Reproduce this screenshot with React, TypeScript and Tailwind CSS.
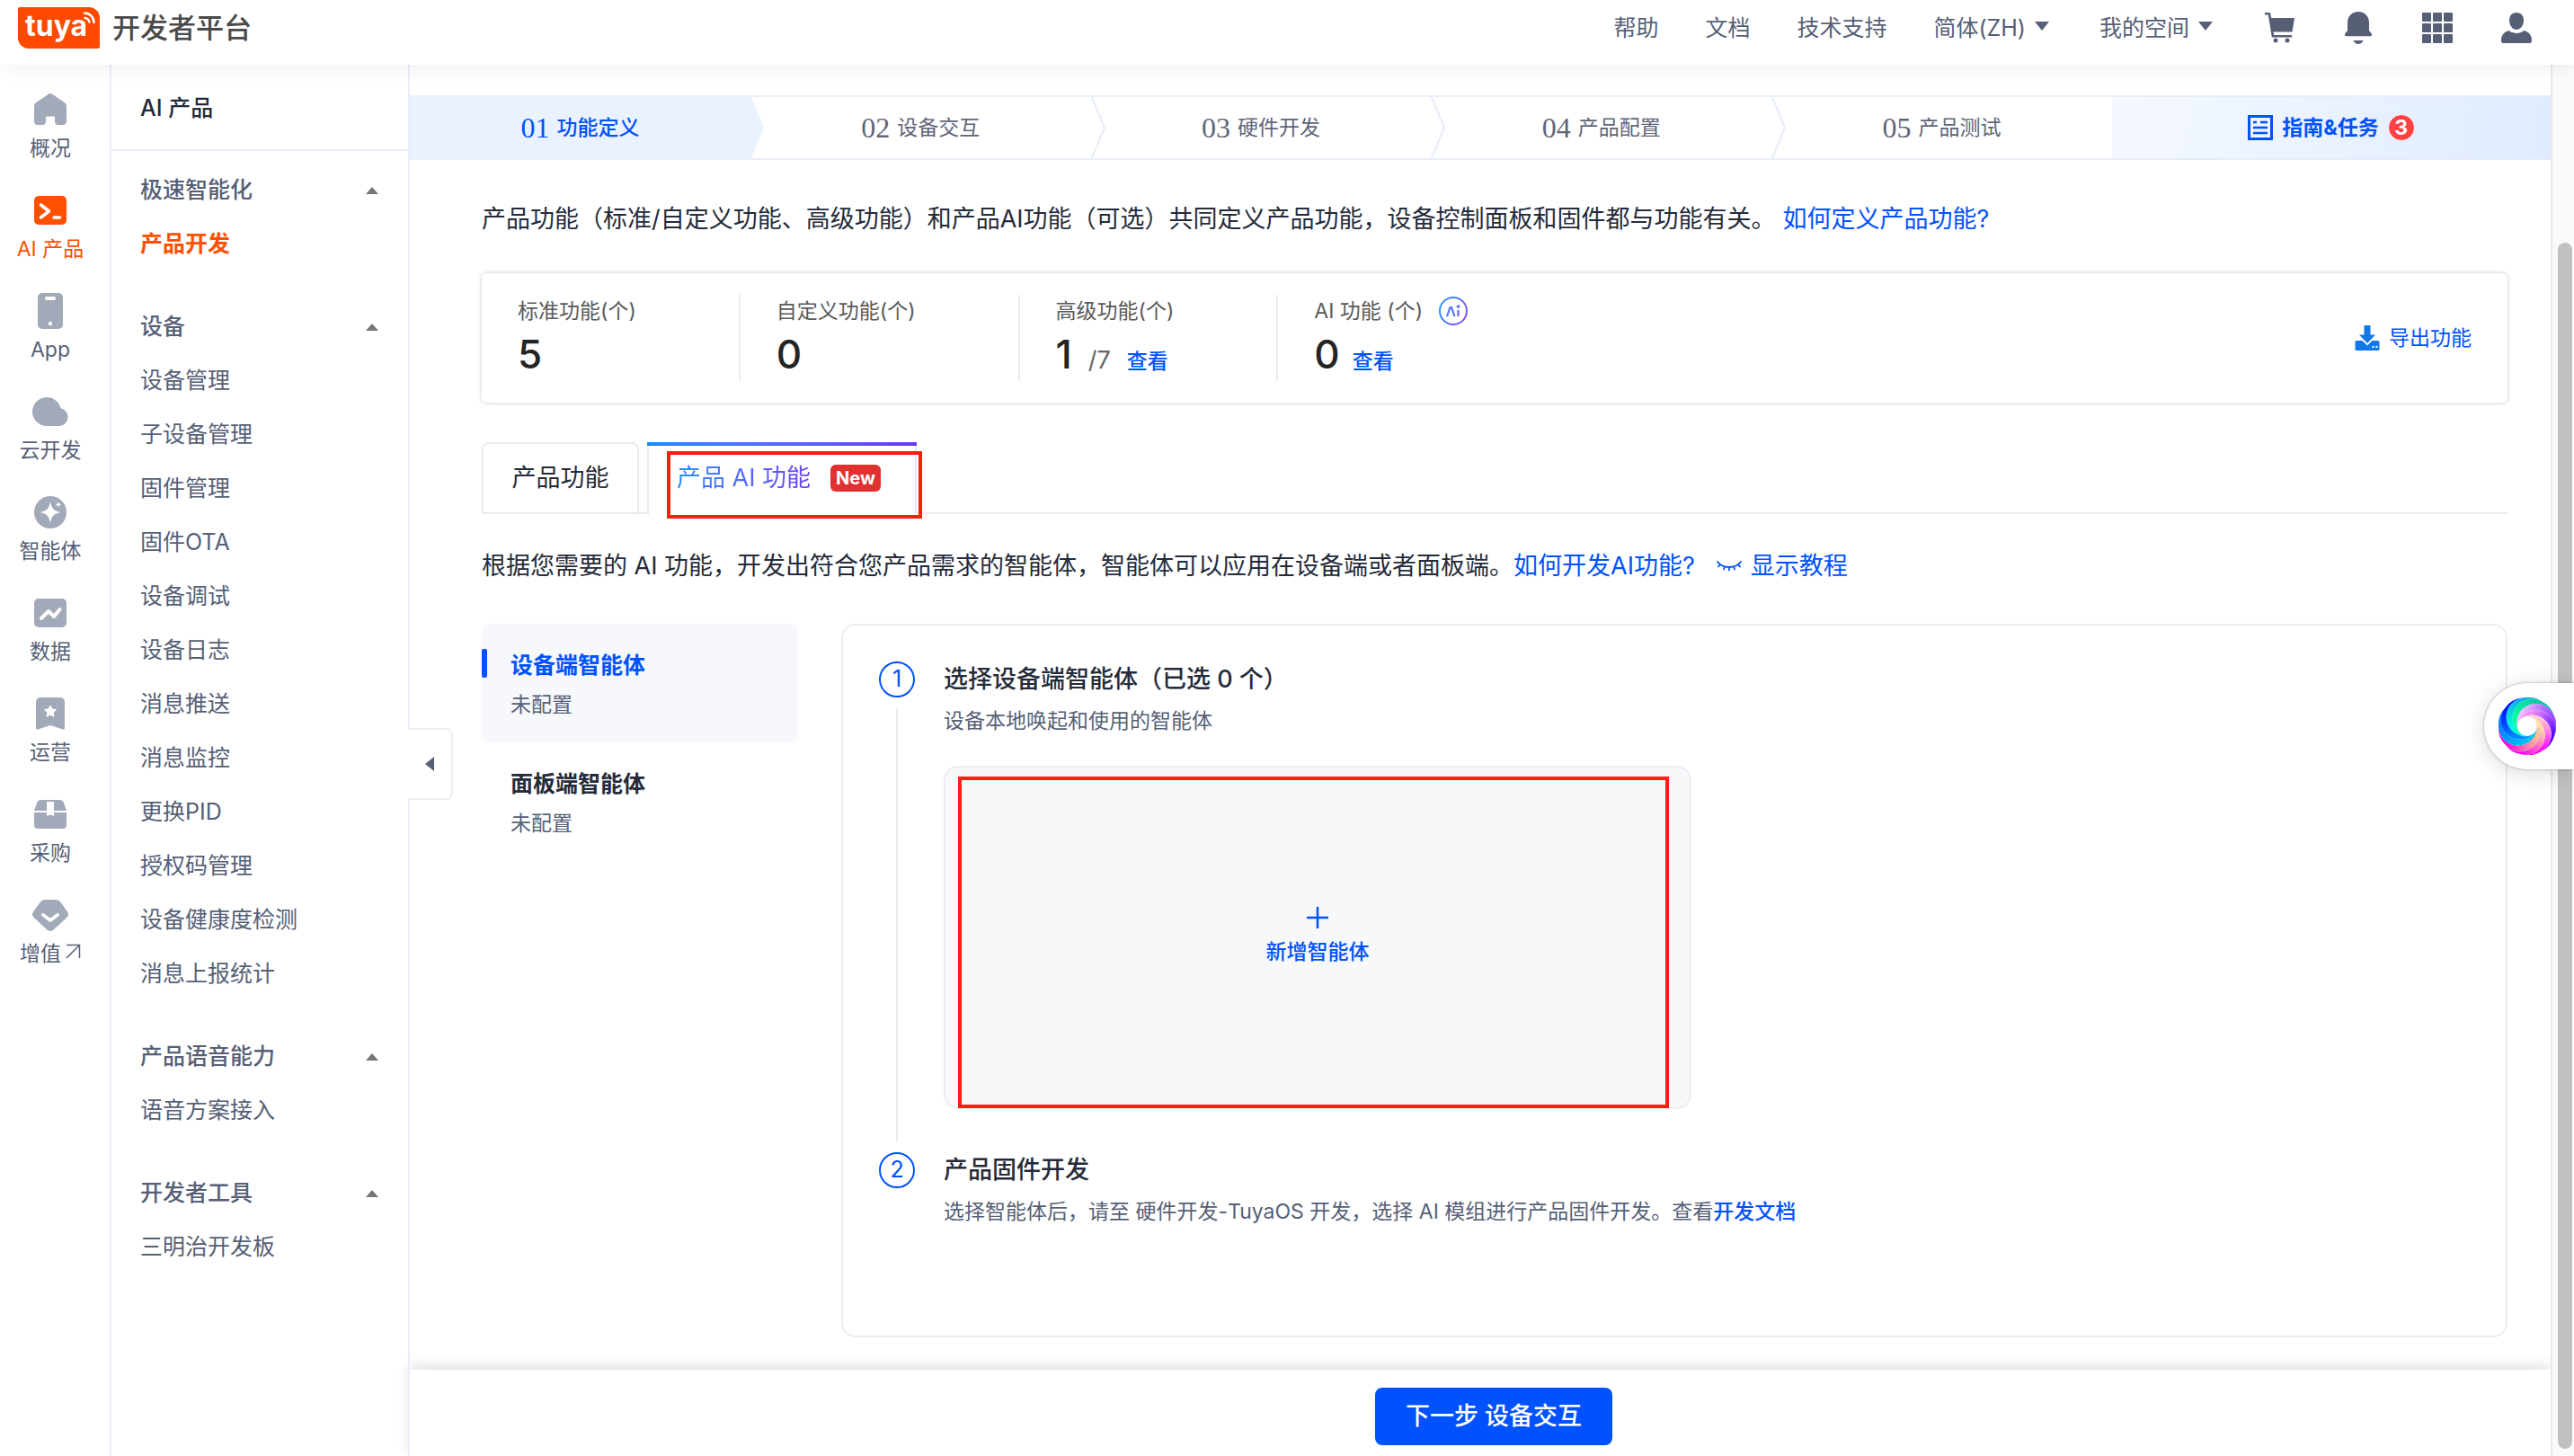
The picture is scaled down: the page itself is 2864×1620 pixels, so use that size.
import type { ReactNode } from 'react';

type RailItem = {
  label: string;
  icon: ReactNode;
  active?: boolean;
  external?: boolean;
};

const railItems: RailItem[] = [
  {
    label: '概况',
    icon: <path d="M17.500 2.900a4.500 4.500 0 0 1 5 0L36 12.200a4.500 4.500 0 0 1 2 3.700V33a4 4 0 0 1-4 4h-5a4 4 0 0 1-4-4v-5.500h-10V33a4 4 0 0 1-4 4H6a4 4 0 0 1-4-4V15.900a4.500 4.500 0 0 1 2-3.700z" />,
  },
  {
    label: 'AI 产品',
    active: true,
    icon: (
      <>
        <rect x="2" y="4" width="36" height="32" rx="5" />
        <path d="M9.500 14l9 7-9 7M24 28h6.500" fill="none" stroke="#fff" strokeWidth="3.500" strokeLinecap="round" strokeLinejoin="round" />
      </>
    ),
  },
  {
    label: 'App',
    icon: (
      <>
        <rect x="6" y="0" width="28" height="40" rx="5" />
        <rect x="14" y="4" width="12" height="4" rx="2" fill="#fff" />
        <circle cx="20" cy="34" r="2.200" fill="#fff" />
      </>
    ),
  },
  {
    label: '云开发',
    icon: <path d="M16 4a16 16 0 0 1 15.500 12.200A10 10 0 0 1 30 36H16A16 16 0 0 1 16 4z" />,
  },
  {
    label: '智能体',
    icon: (
      <>
        <circle cx="20" cy="20" r="18" />
        <path d="M20 8c1.500 8 4 10.500 12 12-8 1.500-10.500 4-12 12-1.500-8-4-10.500-12-12 8-1.500 10.500-4 12-12z" fill="#fff" />
        <path d="M29 8c.5 2.200 1.200 2.900 3.400 3.400-2.200.5-2.900 1.200-3.400 3.400-.5-2.200-1.200-2.900-3.400-3.400 2.200-.5 2.900-1.200 3.400-3.400z" fill="#fff" />
      </>
    ),
  },
  {
    label: '数据',
    icon: (
      <>
        <rect x="2" y="4" width="36" height="32" rx="5" />
        <path d="M10 26l8-8 6 6 6.500-8" fill="none" stroke="#fff" strokeWidth="4" strokeLinecap="round" strokeLinejoin="round" />
      </>
    ),
  },
  {
    label: '运营',
    icon: (
      <>
        <path d="M4 7a5 5 0 0 1 5-5h22a5 5 0 0 1 5 5v29c0 1.500-1 2-2.200 1.500L20 33 6.200 37.500C5 38 4 37.500 4 36z" />
        <path d="M20 11l2 4 4.500.6-3.300 3.200.8 4.500-4-2.200-4 2.200.8-4.500-3.300-3.200L18 15z" fill="#fff" stroke="#fff" strokeWidth="1" strokeLinejoin="round" />
      </>
    ),
  },
  {
    label: '采购',
    icon: (
      <>
        <path d="M9 4h22a4 4 0 0 1 3.800 2.700L38 16H2L5.200 6.700A4 4 0 0 1 9 4z" />
        <path d="M2 18h36v14a4 4 0 0 1-4 4H6a4 4 0 0 1-4-4z" />
        <path d="M16 6h8v16l-4-1.500-4 1.500z" fill="#fff" />
      </>
    ),
  },
  {
    label: '增值',
    external: true,
    icon: (
      <>
        <path d="M14 3h12a7 7 0 0 1 5.500 3l7.500 10.500a5 5 0 0 1-.8 6.500L23.500 36.500a5 5 0 0 1-7 0L1.800 23A5 5 0 0 1 1 16.500L8.500 6A7 7 0 0 1 14 3z" />
        <path d="M12 20l8 6 8-6" fill="none" stroke="#fff" strokeWidth="3.800" strokeLinecap="round" strokeLinejoin="round" />
      </>
    ),
  },
];

const menuGroups = [
  { title: '极速智能化', items: ['产品开发'] },
  {
    title: '设备',
    items: [
      '设备管理',
      '子设备管理',
      '固件管理',
      '固件OTA',
      '设备调试',
      '设备日志',
      '消息推送',
      '消息监控',
      '更换PID',
      '授权码管理',
      '设备健康度检测',
      '消息上报统计',
    ],
  },
  { title: '产品语音能力', items: ['语音方案接入'] },
  { title: '开发者工具', items: ['三明治开发板'] },
];

const steps = [
  { no: '01', label: '功能定义' },
  { no: '02', label: '设备交互' },
  { no: '03', label: '硬件开发' },
  { no: '04', label: '产品配置' },
  { no: '05', label: '产品测试' },
];

// [outer colour, inner colour] for each blade, clockwise from the top
const blades = [
  ['#0fa8ec', '#00ffd5'],
  ['#12c3a4', '#00ffa0'],
  ['#8f45ff', '#f0c0ff'],
  ['#4a00ff', '#f48cff'],
  ['#ff00ff', '#ffd0d0'],
  ['#ff00f0', '#ffe2a0'],
  ['#ff00dc', '#ffc090'],
  ['#0080ff', '#00c4f0'],
  ['#0010ff', '#0090ff'],
];

function polar(deg: number, r: number) {
  const a = (deg * Math.PI) / 180;
  return [32 + r * Math.cos(a), 32 + r * Math.sin(a)];
}

function SwirlLogo() {
  return (
    <svg viewBox="0 0 64 64" className="size-16" aria-hidden="true">
      {blades.map(([outer, inner], i) => {
        const from = -100 + i * 40;
        const to = from + 40;
        const [ax, ay] = polar(from, 32);
        const [bx, by] = polar(from + 180, 11);
        const [cx, cy] = polar(to + 180, 11);
        const [dx, dy] = polar(to, 32);
        return (
          <g key={from}>
            <linearGradient id={`blade-${i}`} gradientUnits="userSpaceOnUse" x1={dx} y1={dy} x2={bx} y2={by}>
              <stop offset="0.1" stopColor={outer} />
              <stop offset="1" stopColor={inner} />
            </linearGradient>
            <path
              d={`M${ax} ${ay}A21.5 21.5 0 0 0 ${bx} ${by}A11 11 0 0 1 ${cx} ${cy}A21.5 21.5 0 0 1 ${dx} ${dy}A26 26 0 0 0 ${ax} ${ay}z`}
              fill={`url(#blade-${i})`}
            />
          </g>
        );
      })}
    </svg>
  );
}

function DownCaret() {
  return (
    <svg viewBox="0 0 24 16" className="h-4 w-6" fill="currentColor" aria-hidden="true">
      <path d="M4 1h16l-8 10z" />
    </svg>
  );
}

function Header() {
  return (
    <header className="relative z-20 flex h-[72px] items-center bg-white pr-[46px] pb-[10px] pl-5 shadow-[0_4px_20px_rgba(0,0,0,0.06)]">
      <a href="#" className="flex items-center gap-[14px]">
        <span className="relative flex h-[46px] w-[91px] items-center rounded-tr-[12px] rounded-bl-[12px] rounded-tl-[2px] rounded-br-[2px] bg-[#ff4800] pb-1 pl-2 text-[32px] leading-[40px] font-bold text-white">
          tuya
          <svg viewBox="0 0 16 16" className="absolute top-1 right-1 size-4" fill="none" stroke="#fff" strokeWidth="2.500" strokeLinecap="round" aria-hidden="true">
            <path d="M3 2.500a10.500 10.500 0 0 1 10.500 10.500M3.500 8a5 5 0 0 1 4.800 4.500" />
          </svg>
        </span>
        <span className="text-[31px] leading-[40px] font-medium text-[#4a4a4a]">开发者平台</span>
      </a>
      <nav className="ml-auto flex items-center gap-[52px] text-[25px] leading-[36px] text-[#565f76]">
        <a href="#">帮助</a>
        <a href="#">文档</a>
        <a href="#">技术支持</a>
        <button className="flex items-center gap-[6px]">
          简体(ZH)
          <DownCaret />
        </button>
        <button className="flex items-center gap-[6px]">
          我的空间
          <DownCaret />
        </button>
        <button aria-label="购物车">
          <svg viewBox="0 0 36 36" className="size-9" fill="currentColor">
            <path d="M2 1h6l1.200 6H35l-2.500 15.500H11.500l.6 3.500H32v2.500H9.800L5.800 3.500H2z" />
            <circle cx="14" cy="32" r="2.500" />
            <circle cx="27" cy="32" r="2.500" />
          </svg>
        </button>
        <button aria-label="通知">
          <svg viewBox="0 0 36 36" className="size-9" fill="currentColor">
            <path d="M18 0c7 0 12 5 12 12v9l2.600 3.200c1.200 1.500.4 3-1.400 3H4.800c-1.800 0-2.600-1.500-1.400-3L6 21v-9C6 5 11 0 18 0z" />
            <path d="M12.500 32h11c-1 2.500-3 4-5.500 4s-4.500-1.500-5.500-4z" />
          </svg>
        </button>
        <button aria-label="应用">
          <svg viewBox="0 0 36 36" className="size-9" fill="currentColor">
            {[1, 13, 25].map((y) => [1, 13, 25].map((x) => <rect key={`${x}-${y}`} x={x} y={y} width="10" height="10" rx="1" />))}
          </svg>
        </button>
        <button aria-label="账户">
          <svg viewBox="0 0 36 36" className="size-9" fill="currentColor">
            <path d="M18 1c5 0 8 3.500 8 8.500S23 20 18 20s-8-5.500-8-10.500S13 1 18 1z" />
            <path d="M9.500 21c5 4 12 4 17 0 5 1.500 8.500 5 8.500 10.500 0 2.500-.5 3.500-2 3.500H3c-1.500 0-2-1-2-3.500C1 26 4.500 22.500 9.500 21z" />
          </svg>
        </button>
      </nav>
    </header>
  );
}

function Rail() {
  return (
    <nav className="flex w-[124px] shrink-0 flex-col items-center gap-[34px] border-r-2 border-[#e9eefa] pt-[30px] pr-[10px]">
      {railItems.map((item) => (
        <a
          key={item.label}
          href="#"
          className={`flex flex-col items-center gap-2 text-[23px] leading-[30px] ${item.active ? 'text-[#ff5000]' : 'text-[#565f76]'}`}
        >
          <svg viewBox="0 0 40 40" className={`size-10 ${item.active ? 'text-[#ff5000]' : 'text-[#a2a9b8]'}`} fill="currentColor" aria-hidden="true">
            {item.icon}
          </svg>
          <span className="flex gap-1 whitespace-nowrap">
            {item.label}
            {item.external && (
              <svg viewBox="0 0 18 18" className="mt-1 size-[18px]" fill="none" stroke="currentColor" strokeWidth="1.500" aria-hidden="true">
                <path d="M2 1.500h14.500V16M16 2L2 16" />
              </svg>
            )}
          </span>
        </a>
      ))}
    </nav>
  );
}

function SideMenu() {
  return (
    <nav className="relative w-[332px] shrink-0 border-r-2 border-[#e9eefa] text-[25px] text-[#565f76]">
      <h2 className="flex h-24 items-center border-b-2 border-[#e9eefa] pt-1 pl-8 font-medium text-[#232a3b]">AI 产品</h2>
      <div className="flex flex-col gap-8 px-8 pt-[14px]">
        {menuGroups.map((group) => (
          <div key={group.title}>
            <button className="flex h-[60px] w-full items-center justify-between font-medium">
              {group.title}
              <svg viewBox="0 0 16 8" className="h-2 w-4" fill="#767676" aria-hidden="true">
                <path d="M8 0l7 8H1z" />
              </svg>
            </button>
            {group.items.map((item) => (
              <a
                key={item}
                href="#"
                className={`flex h-[60px] items-center ${item === '产品开发' ? 'font-bold text-[#ff5000]' : ''}`}
              >
                {item}
              </a>
            ))}
          </div>
        ))}
      </div>

      {/* Collapse handle */}
      <button
        aria-label="收起菜单"
        className="absolute top-[738px] left-full z-10 flex h-20 w-[50px] items-center justify-center rounded-r-lg border-2 border-l-0 border-[#ebedf2] bg-white"
      >
        <svg viewBox="0 0 10 16" className="h-4 w-[10px]" fill="#565f76" aria-hidden="true">
          <path d="M10 0v16L0 8z" />
        </svg>
      </button>
    </nav>
  );
}

function StepBar() {
  return (
    <div className="mt-[34px] flex h-[72px] text-[23px]">
      {steps.map((step, i) => (
        <button
          key={step.no}
          className={`relative flex flex-1 items-center justify-center gap-2 border-y-2 ${
            i === 0 ? 'border-[#ebf2ff] bg-[#ebf2ff] font-medium text-[#0052ff]' : 'border-[#e9eefa] text-[#60657a]'
          }`}
        >
          <span className="font-['Liberation_Serif',serif] text-[32px] font-normal">{step.no}</span>
          {step.label}
          {i < steps.length - 1 && (
            <svg
              viewBox="0 0 16 72"
              className="absolute -top-[2px] left-full z-10 h-[72px] w-4"
              fill={i === 0 ? '#ebf2ff' : '#fff'}
              stroke={i === 0 ? 'none' : '#e6ecf9'}
              strokeWidth="2"
              aria-hidden="true"
            >
              <path d="M0 0l15 36L0 72" />
            </svg>
          )}
        </button>
      ))}
      <button className="flex w-[488px] items-center justify-center gap-[10px] border-y-2 border-[#e6ecf9] bg-[linear-gradient(105deg,#f5f9ff,#dfebff)] font-bold text-[#0052ff]">
        <svg viewBox="0 0 28 28" className="size-7" fill="none" stroke="currentColor" strokeWidth="3" aria-hidden="true">
          <rect x="1.500" y="1.500" width="25" height="25" />
          <path d="M6 8h4M14 8h8M6 14h16M6 20h16" strokeWidth="2.500" />
        </svg>
        指南&amp;任务
        <span className="flex size-[30px] items-center justify-center rounded-full border border-white bg-[#ff4044] text-white">3</span>
      </button>
    </div>
  );
}

function Stat({ label, value, last, children }: { label: ReactNode; value: string; last?: boolean; children?: ReactNode }) {
  return (
    <div className={`pl-10 ${last ? '' : 'border-r-2 border-[#ececee] pr-[114px]'}`}>
      <div className="flex h-9 items-center text-[23px] text-[#5a5a5a]">{label}</div>
      <div className="flex h-[60px] items-baseline text-[23px] leading-[60px]">
        <span className="text-[44px] font-medium text-[#242424]">{value}</span>
        {children}
      </div>
    </div>
  );
}

function StatsCard() {
  return (
    <section className="mt-10 flex items-center rounded-md bg-white py-6 pr-10 shadow-[0_0_5px_rgba(0,0,0,0.22)]">
      <Stat label="标准功能(个)" value="5" />
      <Stat label="自定义功能(个)" value="0" />
      <Stat label="高级功能(个)" value="1">
        <span className="ml-[18px] text-[27px] text-[#666]">/7</span>
        <a href="#" className="ml-[18px] font-medium text-[#0052ff]">查看</a>
      </Stat>
      <Stat
        last
        value="0"
        label={
          <>
            AI 功能 (个)
            <svg viewBox="0 0 32 32" className="ml-[18px] size-8" fill="none" stroke="url(#aiRing)" strokeWidth="2" aria-hidden="true">
              <linearGradient id="aiRing" gradientUnits="userSpaceOnUse" x1="0" y1="8" x2="32" y2="24">
                <stop offset="0" stopColor="#1e96ff" />
                <stop offset="1" stopColor="#8d4dff" />
              </linearGradient>
              <circle cx="16" cy="16" r="15" />
              <path d="M9 22l3.500-10h1.500l3.500 10M21.500 15v7" strokeWidth="2.200" />
              <path d="M21.500 8c.5 2 1 2.500 3 3-2 .5-2.500 1-3 3-.5-2-1-2.500-3-3 2-.5 2.500-1 3-3z" fill="#6d68ff" stroke="none" />
            </svg>
          </>
        }
      >
        <a href="#" className="ml-[14px] font-medium text-[#0052ff]">查看</a>
      </Stat>
      <button className="ml-auto flex items-center gap-[10px] text-[23px] text-[#0052ff]">
        <svg viewBox="0 0 28 28" className="size-7" fill="#1277e8" aria-hidden="true">
          <path d="M10.500 0h7v10.500h5.500L14 20l-9-9.500h5.500z" />
          <path d="M2 17h6.500l5.500 5.500 5.500-5.500H26a1.500 1.500 0 0 1 1.500 1.500v8A1.500 1.500 0 0 1 26 28H2a1.500 1.500 0 0 1-1.500-1.500v-8A1.500 1.500 0 0 1 2 17z" />
          <path d="M19.500 24h2M23.500 24h2" stroke="#fff" strokeWidth="2" />
        </svg>
        导出功能
      </button>
    </section>
  );
}

function Tabs() {
  return (
    <div className="mt-11 flex h-20 text-[27px]" role="tablist">
      <button role="tab" aria-selected="false" className="w-[175px] rounded-t-lg border-2 border-[#e9ebf1] text-[#252b3a]">
        产品功能
      </button>
      <div className="w-[9px] border-b-2 border-[#e9ebf1]" />
      <button role="tab" aria-selected="true" className="relative flex w-[300px] items-center gap-[22px] border-x-2 border-[#e9ebf1] pl-[31px]">
        <span className="absolute -inset-x-[2px] top-0 h-1 bg-linear-to-r from-[#148cff] to-[#6a35ff]" />
        <span className="bg-linear-to-r from-[#1a8cff] to-[#6a3dff] bg-clip-text text-transparent">产品 AI 功能</span>
        <span className="rounded-md bg-[#e03131] px-[6px] text-[20px] leading-[30px] font-bold text-white">New</span>
        <span className="absolute top-[10px] left-5 h-[75px] w-[284px] border-4 border-[#ff1f12]" />
      </button>
      <div className="flex-1 border-b-2 border-[#e9ebf1]" />
    </div>
  );
}

function AgentTarget({ title, active }: { title: string; active?: boolean }) {
  return (
    <button className={`relative flex w-full flex-col gap-2 rounded-lg px-8 pt-7 pb-6 text-left leading-[36px] ${active ? 'bg-[#f6f8fc]' : ''}`}>
      {active && <span className="absolute top-7 left-0 h-8 w-[6px] rounded-[2px] bg-[#0052ff]" />}
      <span className={`text-[25px] font-bold ${active ? 'text-[#0052ff]' : 'text-[#252b3a]'}`}>{title}</span>
      <span className="text-[23px] text-[#565f76]">未配置</span>
    </button>
  );
}

function StepNumber({ children }: { children: ReactNode }) {
  return (
    <span className="flex size-10 shrink-0 items-center justify-center rounded-full border-2 border-[#0052ff] text-[25px] text-[#0052ff]">
      {children}
    </span>
  );
}

function AgentPanel() {
  return (
    <section className="flex-1 rounded-2xl border-2 border-[#ebedf2] px-10 pt-10">
      <div className="flex gap-8">
        <div className="flex flex-col items-center">
          <StepNumber>1</StepNumber>
          <div className="my-3 w-[2px] flex-1 bg-[#e9ebf0]" />
        </div>
        <div className="pb-12">
          <h3 className="text-[27px] leading-[40px] font-medium text-[#252b3a]">选择设备端智能体（已选 0 个）</h3>
          <p className="mt-2 text-[23px] leading-[36px] text-[#565f76]">设备本地唤起和使用的智能体</p>
          <button className="relative mt-8 flex h-[382px] w-[832px] flex-col items-center justify-center gap-2 rounded-2xl border-2 border-[#ebedf2] bg-[#f7f8fa] text-[23px] leading-[36px] font-medium text-[#0052ff]">
            <svg viewBox="0 0 24 24" className="size-6" fill="none" stroke="currentColor" strokeWidth="2.500" aria-hidden="true">
              <path d="M12 0v24M0 12h24" />
            </svg>
            新增智能体
            <span className="absolute top-[10px] left-[14px] h-[369px] w-[791px] border-4 border-[#ff1f12]" />
          </button>
        </div>
      </div>
      <div className="flex gap-8">
        <StepNumber>2</StepNumber>
        <div>
          <h3 className="text-[27px] leading-[40px] font-medium text-[#252b3a]">产品固件开发</h3>
          <p className="mt-2 text-[23px] leading-[36px] text-[#565f76]">
            选择智能体后，请至 硬件开发-TuyaOS 开发，选择 AI 模组进行产品固件开发。查看
            <a href="#" className="font-medium text-[#0052ff]">开发文档</a>
          </p>
        </div>
      </div>
    </section>
  );
}

export default function App() {
  return (
    <div className="flex min-h-screen flex-col bg-white font-['Inter','Noto_Sans_CJK_SC',sans-serif]">
      <Header />
      <div className="flex flex-1">
        <Rail />
        <SideMenu />
        <main className="flex min-w-0 flex-1 flex-col">
          <StepBar />
          <div className="flex flex-1 flex-col pr-12 pb-9 pl-20">
            <p className="mt-[46px] text-[27px] leading-[40px] text-[#252b3a]">
              产品功能（标准/自定义功能、高级功能）和产品AI功能（可选）共同定义产品功能，设备控制面板和固件都与功能有关。
              <a href="#" className="ml-2 text-[#0052ff]">如何定义产品功能?</a>
            </p>
            <StatsCard />
            <Tabs />
            <div className="mt-[38px] flex items-center text-[27px] leading-[40px] text-[#252b3a]">
              <p>
                根据您需要的 AI 功能，开发出符合您产品需求的智能体，智能体可以应用在设备端或者面板端。
                <a href="#" className="text-[#0052ff]">如何开发AI功能?</a>
              </p>
              <button className="ml-6 flex items-center gap-[10px] text-[#0052ff]">
                <svg viewBox="0 0 28 12" className="h-3 w-7" fill="none" stroke="currentColor" strokeWidth="1.800" strokeLinecap="round" aria-hidden="true">
                  <path d="M1 1c6 8 20 8 26 0M4 4L2 6.500M9 6.500L8 9.500M14 7.500v3M19 6.500l1 3M24 4l2 2.500" />
                </svg>
                显示教程
              </button>
            </div>
            <div className="mt-11 flex flex-1 gap-12">
              <div className="w-[352px] shrink-0">
                <AgentTarget title="设备端智能体" active />
                <AgentTarget title="面板端智能体" />
              </div>
              <AgentPanel />
            </div>
          </div>
          <footer className="flex h-24 items-start justify-center bg-white pt-5 pl-[30px] shadow-[0_-4px_14px_rgba(0,0,0,0.13)]">
            <button className="h-16 rounded-lg bg-[#0052ff] px-[34px] text-[27px] font-medium text-white">下一步 设备交互</button>
          </footer>
        </main>

        {/* Scroll track */}
        <div className="flex w-[26px] shrink-0 flex-col border-l-2 border-[#e8e8e8] bg-[#fafafa] pt-[198px] pb-2 pl-[6px]">
          <div className="w-4 flex-1 rounded-full bg-[#c1c1c1]" />
        </div>
      </div>

      {/* Assistant launcher */}
      <button
        aria-label="智能助手"
        className="fixed top-[760px] right-0 z-30 flex h-24 w-[100px] items-center rounded-l-full bg-white pl-4 shadow-[0_4px_24px_rgba(0,0,0,0.15),0_0_3px_rgba(0,0,0,0.35)]"
      >
        <SwirlLogo />
      </button>
    </div>
  );
}
